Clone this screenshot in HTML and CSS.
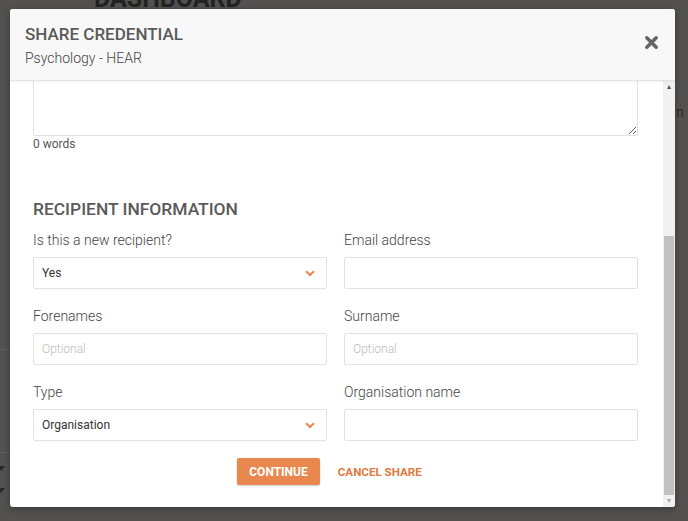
FILE: index.html
```html
<!DOCTYPE html>
<html lang="en">
<head>
    <meta charset="UTF-8">
    <title>Share Credential</title>
    <link rel="stylesheet" href="styles.css">
</head>
<body>
    <!-- page behind the backdrop -->
    <div class="page">
        <h1 class="page-title">DASHBOARD</h1>
        <span class="page-side-text">n I</span>
        <div class="page-rule rule-1"></div>
        <div class="page-rule rule-2"></div>
        <span class="page-caret caret-1"></span>
        <span class="page-caret caret-2"></span>
    </div>

    <div class="modal">
        <div class="modal-header">
            <div>
                <h2 class="modal-title">SHARE CREDENTIAL</h2>
                <p class="modal-subtitle">Psychology - HEAR</p>
            </div>
            <button class="close-btn" aria-label="Close">
                <svg width="15" height="15" viewBox="0 0 16 16">
                    <path d="M3 3 L13 13 M13 3 L3 13" stroke="#666" stroke-width="3.8" stroke-linecap="round"/>
                </svg>
            </button>
        </div>

        <div class="modal-body">
            <div class="modal-content">
                <textarea class="message"></textarea>
                <div class="word-count">0 words</div>

                <h3 class="section-title">RECIPIENT INFORMATION</h3>

                <div class="form-grid">
                    <div class="field">
                        <label>Is this a new recipient?</label>
                        <div class="select">
                            <span>Yes</span>
                            <svg width="10" height="7" viewBox="0 0 10 7"><path d="M1 1.2 L5 5 L9 1.2" fill="none" stroke="#e8874e" stroke-width="2"/></svg>
                        </div>
                    </div>
                    <div class="field">
                        <label>Email address</label>
                        <input type="text">
                    </div>
                    <div class="field">
                        <label>Forenames</label>
                        <input type="text" placeholder="Optional">
                    </div>
                    <div class="field">
                        <label>Surname</label>
                        <input type="text" placeholder="Optional">
                    </div>
                    <div class="field">
                        <label>Type</label>
                        <div class="select">
                            <span>Organisation</span>
                            <svg width="10" height="7" viewBox="0 0 10 7"><path d="M1 1.2 L5 5 L9 1.2" fill="none" stroke="#e8874e" stroke-width="2"/></svg>
                        </div>
                    </div>
                    <div class="field">
                        <label>Organisation name</label>
                        <input type="text">
                    </div>
                </div>

                <div class="actions">
                    <button class="btn-continue">CONTINUE</button>
                    <button class="btn-cancel">CANCEL SHARE</button>
                </div>
            </div>

            <!-- scrollbar, scrolled to the bottom -->
            <div class="scrollbar">
                <span class="arrow">&#9652;</span>
                <div class="thumb"></div>
                <span class="arrow">&#9662;</span>
            </div>
        </div>
    </div>
</body>
</html>
```

FILE: styles.css
```css
* {
    margin: 0;
    padding: 0;
    box-sizing: border-box;
    font-family: 'Roboto', 'Liberation Sans', sans-serif;
}

body {
    width: 688px;
    height: 521px;
    overflow: hidden;
    background-color: #53514f;
    position: relative;
}

/* page behind the backdrop */
.page-title {
    font-size: 25px;
    font-weight: 700;
    line-height: 30px;
    color: #222;
    margin: -16px 0 0 94px;
}

.page-side-text {
    position: absolute;
    left: 676px;
    top: 104px;
    font-size: 14px;
    white-space: nowrap;
    color: #2e2d2c;
}

.page-rule {
    position: absolute;
    left: 0;
    width: 10px;
    height: 1px;
    background-color: #605e5c;
}

.rule-1 { top: 349px; }
.rule-2 { top: 452px; }

.page-caret {
    position: absolute;
    left: 0;
    width: 0;
    height: 0;
    border-left: 4px solid transparent;
    border-right: 4px solid transparent;
    border-top: 5px solid #2a2928;
    margin-left: -3px;
}

.caret-1 { top: 466px; }
.caret-2 { top: 488px; }

/* modal */
.modal {
    position: absolute;
    left: 10px;
    top: 9px;
    width: 665px;
    height: 498px;
    background-color: #fff;
    border-radius: 3px;
    display: flex;
    flex-direction: column;
    overflow: hidden;
    box-shadow: 0 2px 6px rgba(0, 0, 0, 0.3);
}

.modal-header {
    height: 72px;
    flex-shrink: 0;
    background-color: #f8f8f8;
    border-bottom: 1px solid #e4e4e4;
    box-shadow: 0 1px 3px rgba(0, 0, 0, 0.06);
    display: flex;
    justify-content: space-between;
    align-items: center;
    padding: 0 14px 0 15px;
    position: relative;
    z-index: 1;
}

.modal-title {
    font-size: 17px;
    font-weight: 500;
    color: #5a5a5a;
    line-height: 20px;
    margin-top: 2px;
}

.modal-subtitle {
    font-size: 14px;
    font-weight: 300;
    color: #444;
    line-height: 18px;
    margin-top: 5px;
}

.close-btn {
    border: none;
    background: none;
    width: 16px;
    height: 16px;
    display: flex;
    align-items: center;
    justify-content: center;
    margin: -4px 2px 0 0;
}

.modal-body {
    flex: 1;
    display: flex;
    min-height: 0;
}

.modal-content {
    flex: 1;
    overflow: hidden;
    padding: 0 25px 0 23px;
}

.message {
    display: block;
    width: 100%;
    height: 60px;
    margin-top: -5px;
    border: 1px solid #e2e2e2;
    border-radius: 2px;
    resize: vertical;
}

.word-count {
    font-size: 12px;
    line-height: 16px;
    color: #555;
}

.section-title {
    font-size: 17.4px;
    font-weight: 500;
    line-height: 22px;
    color: #5a5a5a;
    margin-top: 46px;
    margin-bottom: 10px;
}

.form-grid {
    display: grid;
    grid-template-columns: 1fr 1fr;
    column-gap: 17px;
    row-gap: 17px;
}

.field label {
    display: block;
    font-size: 14px;
    font-weight: 300;
    line-height: 20px;
    color: #444;
    margin-bottom: 7px;
}

.field input,
.select {
    width: 100%;
    height: 32px;
    border: 1px solid #e2e2e2;
    border-radius: 2px;
    background-color: #fff;
    padding: 0 8px;
    font-size: 12px;
    color: #333;
}

.field input::placeholder {
    color: #bdbdbd;
    font-weight: 300;
}

.select {
    display: flex;
    align-items: center;
    justify-content: space-between;
    padding-right: 11px;
    box-shadow: 0 1px 1px rgba(0, 0, 0, 0.03);
}

.actions {
    display: flex;
    justify-content: center;
    align-items: center;
    gap: 18px;
    margin-top: 17px;
    padding-right: 12px;
}

.btn-continue {
    height: 27px;
    padding: 0 12px;
    background-color: #e8874e;
    color: #fff;
    border: none;
    border-radius: 2px;
    font-size: 12px;
    font-weight: 700;
    box-shadow: 0 1px 2px rgba(0, 0, 0, 0.2);
}

.btn-cancel {
    border: none;
    background: none;
    color: #e07a3e;
    font-size: 11.6px;
    font-weight: 700;
}

/* fake scrollbar */
.scrollbar {
    width: 12px;
    background-color: #f1f1f1;
    display: flex;
    flex-direction: column;
    align-items: center;
}

.arrow {
    font-size: 8px;
    line-height: 12px;
    height: 12px;
    color: #555;
}

.arrow:last-child {
    color: #a3a3a3;
}

.thumb {
    width: 10px;
    background-color: #c1c1c1;
    margin-top: 143px;
    flex: 1;
}
```
